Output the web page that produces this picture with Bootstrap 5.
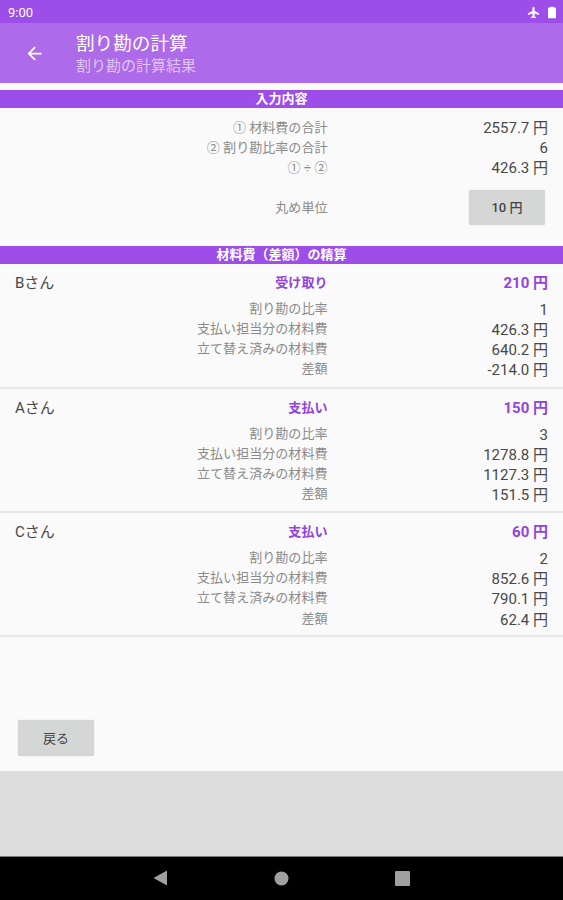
<!DOCTYPE html>
<html lang="ja">
<head>
<meta charset="utf-8">
<meta name="viewport" content="width=device-width, initial-scale=1">
<title>割り勘の計算</title>
<link href="https://cdn.jsdelivr.net/npm/bootstrap@5.3.0/dist/css/bootstrap.min.css" rel="stylesheet">
<style>
body{font-family:Roboto,"Noto Sans CJK JP",sans-serif;background:#fafafa;color:#484848;height:900px;font-size:15px;overflow:hidden}
svg{display:block;flex:none}
.status-bar{height:23px;background:#9d4de8;font-size:13px;padding:2px 7px 0 8px}
.app-bar{height:60px;background:#ad6be9;padding-left:24px}
.app-titles{margin-left:31px;padding-top:1px}
.app-title{font-size:18.6px;line-height:24px}
.app-sub{font-size:15px;line-height:20px;color:#dfc5f7}
.section-bar{height:18px;line-height:18px;background:#9d4de8;font-size:13px}
.first-bar{margin-top:7px}
.names{width:180px;padding-left:15px}
.labels{width:147.5px;font-size:13.05px;line-height:20.2px;color:#8b8b8b;white-space:nowrap}
.values{padding-right:15px;line-height:20.2px}
.accent{color:#9144dc}
.summary{padding-top:10px}
.rounding{height:36px;margin-top:11px}
.rounding-value{padding-right:18px}
.flat-btn{width:76px;height:35px;background:#d5d7d6;border-radius:2px;font-size:13px;font-weight:500;line-height:1;color:#444;padding:0;border:0;box-shadow:0 0 1px #bbb}
.section-gap{margin-top:20px}
.person{height:124.3px;border-bottom:2px solid #e8e8e8;padding-top:9px}
.person:first-child{height:125px}
.heading-line{height:20px;line-height:20px}
.labels .detail{margin-top:6px}
.values .detail{margin-top:7px}
.back-wrap{padding:0 0 15px 18px}
.back-wrap .flat-btn{height:36px;font-weight:400}
.ad-space{height:84.500px;background:#ddd}
.nav-keys{height:44.500px;background:#000;border-top:1px solid #777}
.keys{gap:106px}
</style>
<script src="https://cdn.jsdelivr.net/npm/bootstrap@5.3.0/dist/js/bootstrap.bundle.min.js"></script>
</head>
<body class="d-flex flex-column">
<div class="status-bar d-flex align-items-center justify-content-between text-white">
  <span>9:00</span>
  <span class="d-flex align-items-center">
    <svg width="13" height="13" viewBox="0 0 24 24" fill="#fff" stroke="#fff" stroke-width=".8"><path d="M22 16v-2l-8.500-5V3.500a1.500 1.500 0 0 0-3 0V9L2 14v2l8.500-2.500V19L8 20.500V22l4-1 4 1v-1.500L13.500 19v-5.500z"/></svg>
    <svg class="ms-2" width="8" height="13" viewBox="0 0 9 13" fill="#fff"><path d="M2.500 0h4v1H8q1 0 1 1v10q0 1-1 1H1q-1 0-1-1V2q0-1 1-1h1.500z"/></svg>
  </span>
</div>
<header class="app-bar d-flex align-items-center text-white">
  <svg width="21" height="21" viewBox="0 0 24 24" fill="#fff"><path d="M20 11H7.830l5.590-5.590L12 4l-8 8 8 8 1.410-1.410L7.830 13H20z"/></svg>
  <div class="app-titles">
    <div class="app-title">割り勘の計算</div>
    <div class="app-sub">割り勘の計算結果</div>
  </div>
</header>
<main class="flex-grow-1 d-flex flex-column">
  <div class="section-bar first-bar text-white text-center fw-bold">入力内容</div>
  <section class="summary">
    <div class="d-flex">
      <div class="names"></div>
      <div class="labels text-end"><div>① 材料費の合計</div><div>② 割り勘比率の合計</div><div>① ÷ ②</div></div>
      <div class="values text-end flex-grow-1"><div>2557.7 円</div><div>6</div><div>426.3 円</div></div>
    </div>
    <div class="rounding d-flex align-items-center">
      <div class="names"></div>
      <div class="labels text-end">丸め単位</div>
      <div class="rounding-value flex-grow-1 d-flex justify-content-end"><button class="btn flat-btn">10 円</button></div>
    </div>
  </section>
  <div class="section-bar section-gap text-white text-center fw-bold">材料費（差額）の精算</div>
  <section>
    <div class="person d-flex">
      <div class="names heading-line">Bさん</div>
      <div class="labels text-end"><div class="heading-line accent fw-bold">受け取り</div><div class="detail"><div>割り勘の比率</div><div>支払い担当分の材料費</div><div>立て替え済みの材料費</div><div>差額</div></div></div>
      <div class="values text-end flex-grow-1"><div class="heading-line accent fw-bold">210 円</div><div class="detail"><div>1</div><div>426.3 円</div><div>640.2 円</div><div>-214.0 円</div></div></div>
    </div>
    <div class="person d-flex">
      <div class="names heading-line">Aさん</div>
      <div class="labels text-end"><div class="heading-line accent fw-bold">支払い</div><div class="detail"><div>割り勘の比率</div><div>支払い担当分の材料費</div><div>立て替え済みの材料費</div><div>差額</div></div></div>
      <div class="values text-end flex-grow-1"><div class="heading-line accent fw-bold">150 円</div><div class="detail"><div>3</div><div>1278.8 円</div><div>1127.3 円</div><div>151.5 円</div></div></div>
    </div>
    <div class="person d-flex">
      <div class="names heading-line">Cさん</div>
      <div class="labels text-end"><div class="heading-line accent fw-bold">支払い</div><div class="detail"><div>割り勘の比率</div><div>支払い担当分の材料費</div><div>立て替え済みの材料費</div><div>差額</div></div></div>
      <div class="values text-end flex-grow-1"><div class="heading-line accent fw-bold">60 円</div><div class="detail"><div>2</div><div>852.6 円</div><div>790.1 円</div><div>62.4 円</div></div></div>
    </div>
  </section>
  <div class="back-wrap mt-auto"><button class="btn flat-btn">戻る</button></div>
</main>
<div class="ad-space"></div>
<footer class="nav-keys d-flex align-items-center justify-content-center">
  <div class="keys d-flex align-items-center">
    <svg width="15" height="16" viewBox="0 0 15 16" fill="#a0a0a0"><path d="M14 .5v15L.5 8z"/></svg>
    <svg width="15" height="15" viewBox="0 0 15 15" fill="#a0a0a0"><circle cx="7.500" cy="7.500" r="7"/></svg>
    <svg width="15" height="15" viewBox="0 0 15 15" fill="#a0a0a0"><rect width="15" height="15" rx="1"/></svg>
  </div>
</footer>
</body>
</html>
